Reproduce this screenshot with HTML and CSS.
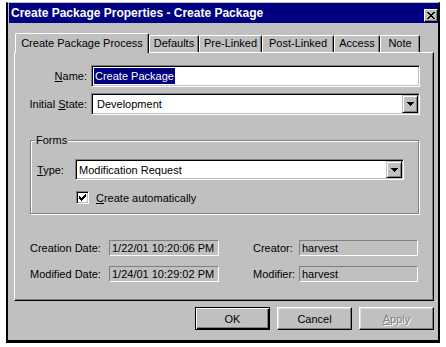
FILE: index.html
```html
<!DOCTYPE html>
<html lang="en">
<head>
    <meta charset="UTF-8">
    <title>Create Package Properties - Create Package</title>
    <link rel="stylesheet" href="styles.css">
</head>
<body>
    <div class="window">
        <div class="titlebar">
            <span class="title">Create Package Properties - Create Package</span>
            <span class="close">
                <svg width="8" height="7" viewBox="0 0 8 7" shape-rendering="crispEdges">
                    <path d="M0 0h2v1h-2zM6 0h2v1h-2zM1 1h2v1h-2zM5 1h2v1h-2zM2 2h4v1h-4zM3 3h2v1h-2zM2 4h4v1h-4zM1 5h2v1h-2zM5 5h2v1h-2zM0 6h2v1h-2zM6 6h2v1h-2z" fill="#000"/>
                </svg>
            </span>
        </div>

        <div class="tabs">
            <div class="tab active tab-process">Create Package Process</div>
            <div class="tab tab-defaults">Defaults</div>
            <div class="tab tab-prelinked">Pre-Linked</div>
            <div class="tab tab-postlinked">Post-Linked</div>
            <div class="tab tab-access">Access</div>
            <div class="tab tab-note">Note</div>
        </div>

        <div class="panel">
            <div class="field-row">
                <label class="label"><u>N</u>ame:</label>
                <div class="edit"><span class="selected">Create Package</span></div>
            </div>
            <div class="field-row">
                <label class="label">Initial <u>S</u>tate:</label>
                <div class="combo">
                    <span class="combo-text">Development</span>
                    <span class="combo-btn">
                        <svg width="7" height="4" viewBox="0 0 7 4" shape-rendering="crispEdges">
                            <path d="M0 0h7v1h-7zM1 1h5v1h-5zM2 2h3v1h-3zM3 3h1v1h-1z" fill="#000"/>
                        </svg>
                    </span>
                </div>
            </div>

            <fieldset class="group">
                <legend>Forms</legend>
                <div class="type-row">
                    <label class="type-label"><u>T</u>ype:</label>
                    <div class="combo combo-type">
                        <span class="combo-text">Modification Request</span>
                        <span class="combo-btn">
                            <svg width="7" height="4" viewBox="0 0 7 4" shape-rendering="crispEdges">
                                <path d="M0 0h7v1h-7zM1 1h5v1h-5zM2 2h3v1h-3zM3 3h1v1h-1z" fill="#000"/>
                            </svg>
                        </span>
                    </div>
                </div>
                <div class="check-row">
                    <span class="checkbox">
                        <svg width="7" height="7" viewBox="0 0 7 7" shape-rendering="crispEdges">
                            <path d="M6 0h1v1h-1zM5 1h2v1h-2zM0 2h1v1h-1zM4 2h3v1h-3zM0 3h2v1h-2zM3 3h3v1h-3zM0 4h5v1h-5zM1 5h3v1h-3zM2 6h1v1h-1z" fill="#000"/>
                        </svg>
                    </span>
                    <span class="check-text"><u>C</u>reate automatically</span>
                </div>
            </fieldset>

            <div class="info">
                <span class="info-label">Creation Date:</span>
                <span class="readonly">1/22/01 10:20:06 PM</span>
                <span class="info-label second">Creator:</span>
                <span class="readonly">harvest</span>

                <span class="info-label">Modified Date:</span>
                <span class="readonly">1/24/01 10:29:02 PM</span>
                <span class="info-label second">Modifier:</span>
                <span class="readonly">harvest</span>
            </div>
        </div>

        <div class="buttons">
            <button class="btn default">OK</button>
            <button class="btn">Cancel</button>
            <button class="btn disabled"><u>A</u>pply</button>
        </div>
    </div>
</body>
</html>
```

FILE: styles.css
```css
body {
    margin: 0;
    background-color: #fff;
    font-family: "Liberation Sans", Arial, sans-serif;
    font-size: 11px;
    color: #000;
}
.window {
    box-sizing: border-box;
    width: 434px;
    height: 341px;
    margin: 2px 0 0 6px;
    background-color: #c0c0c0;
    border-style: solid;
    border-color: #c0c0c0 #000 #000 #000;
    border-width: 1px 2px 3px 2px;
}
.titlebar {
    display: flex;
    justify-content: space-between;
    align-items: flex-start;
    height: 20px;
    margin-left: 1px;
    background-color: #000080;
    color: #fff;
    font-weight: bold;
}
.title {
    font-size: 12px;
    line-height: 20px;
    padding-left: 2px;
}
.close {
    box-sizing: border-box;
    width: 14px;
    height: 13px;
    margin-top: 6px;
    background-color: #c0c0c0;
    border: 1px solid;
    border-color: #fff #000 #000 #fff;
    box-shadow: inset -1px -1px #808080;
    display: flex;
    align-items: center;
    justify-content: center;
}

/* tabs */
.tabs {
    display: flex;
    align-items: flex-end;
    margin-left: 7px;
    padding-top: 10px;
}
.tab {
    box-sizing: border-box;
    height: 17px;
    border: 1px solid;
    border-color: #fff #000 transparent #fff;
    border-bottom: none;
    border-radius: 2px 2px 0 0;
    box-shadow: inset -1px 0 #808080;
    text-align: center;
    line-height: 15px;
    white-space: nowrap;
}
.tab.active {
    height: 20px;
    margin-bottom: -1px;
    position: relative;
    z-index: 1;
    background-color: #c0c0c0;
    line-height: 18px;
}
.tab-process { width: 134px; }
.tab-defaults { width: 50px; }
.tab-prelinked { width: 63px; }
.tab-postlinked { width: 72px; }
.tab-access { width: 46px; }
.tab-note { width: 40px; }

.panel {
    box-sizing: border-box;
    width: 420px;
    height: 249px;
    margin-left: 6px;
    border: 1px solid;
    border-color: #fff #000 #000 #fff;
    box-shadow: inset -1px -1px #808080;
    padding: 12px 13px 0 0;
}

/* fields */
.field-row {
    display: flex;
    align-items: center;
    margin-bottom: 6px;
}
.label {
    flex: none;
    width: 72px;
    margin-right: 4px;
    text-align: right;
}
.edit, .combo {
    box-sizing: border-box;
    flex: 1;
    height: 22px;
    display: flex;
    align-items: center;
    background-color: #fff;
    border: 1px solid;
    border-color: #808080 #fff #fff #808080;
    box-shadow: inset 1px 1px #000, inset -1px -1px #c0c0c0;
    padding: 1px 1px 1px 2px;
}
.selected {
    background-color: #000080;
    color: #fff;
    padding: 1px 1px;
    line-height: 14px;
}
.combo-text {
    flex: 1;
    padding-left: 3px;
}
.combo-btn {
    box-sizing: border-box;
    width: 16px;
    height: 100%;
    display: flex;
    align-items: center;
    justify-content: center;
    background-color: #c0c0c0;
    border: 1px solid;
    border-color: #c0c0c0 #000 #000 #c0c0c0;
    box-shadow: inset 1px 1px #fff, inset -1px -1px #808080;
}

/* group box */
.group {
    margin: 19px 1px 0 15px;
    padding: 12px 14px 9px 6px;
    border: 1px solid #808080;
    box-shadow: 1px 1px #fff, inset 1px 1px #fff;
    min-width: 0;
}
.group legend {
    margin-left: -2px;
    padding: 0 1px;
    line-height: 13px;
    background-color: #c0c0c0;
}
.type-row {
    display: flex;
    align-items: center;
}
.type-label {
    flex: none;
    width: 38px;
}
.combo-type {
    height: 21px;
}
.combo-type .combo-text {
    padding-left: 1px;
}
.check-row {
    display: flex;
    align-items: center;
    margin-top: 11px;
    padding-left: 39px;
}
.checkbox {
    box-sizing: border-box;
    width: 13px;
    height: 13px;
    display: flex;
    align-items: center;
    justify-content: center;
    background-color: #fff;
    border: 1px solid;
    border-color: #808080 #fff #fff #808080;
    box-shadow: inset 1px 1px #000, inset -1px -1px #c0c0c0;
}
.check-text {
    margin-left: 7px;
}

/* dates */
.info {
    display: grid;
    grid-template-columns: 79px 110px 80px 119px;
    row-gap: 10px;
    align-items: center;
    margin: 26px 0 0 15px;
}
.info-label.second {
    padding-left: 34px;
}
.readonly {
    box-sizing: border-box;
    height: 16px;
    border: 1px solid;
    border-color: #808080 #fff #fff #808080;
    padding-left: 2px;
    line-height: 14px;
}

/* buttons */
.buttons {
    display: flex;
    justify-content: flex-end;
    gap: 7px;
    margin-top: 6px;
    padding-right: 4px;
}
.btn {
    box-sizing: border-box;
    width: 75px;
    height: 23px;
    font: inherit;
    color: #000;
    background-color: #c0c0c0;
    border: 1px solid;
    border-color: #fff #000 #000 #fff;
    box-shadow: inset -1px -1px #808080, inset 1px 1px #dfdfdf;
    padding: 0;
}
.btn.default {
    border-color: #000;
    box-shadow: inset 1px 1px #fff, inset -1px -1px #000, inset -2px -2px #808080;
}
.btn.disabled {
    color: #808080;
    text-shadow: 1px 1px #fff;
}
```
